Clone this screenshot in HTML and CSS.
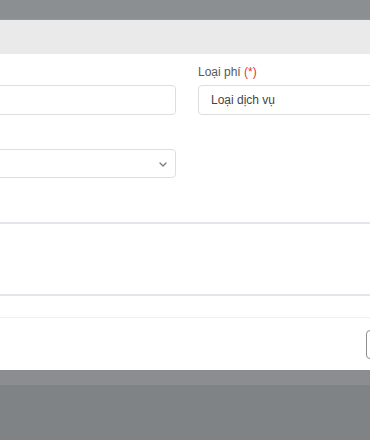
FILE: index.html
```html
<!DOCTYPE html>
<html lang="vi">
<head>
    <meta charset="UTF-8">
    <meta name="viewport" content="width=device-width, initial-scale=1.0">
    <title>Phí dịch vụ</title>
    <link rel="stylesheet" href="styles.css">
</head>
<body>

    <div class="backdrop-top"></div>

    <div class="modal">
        <div class="modal-header">
            <span class="modal-title">Thêm phí</span>
        </div>

        <form class="modal-body" id="feeForm">
            <div class="field">
                <label for="feeName">Tên phí <span class="req">(*)</span></label>
                <input type="text" id="feeName" class="control">
            </div>

            <div class="field">
                <label for="feeType">Loại phí <span class="req">(*)</span></label>
                <input type="text" id="feeType" class="control" value="Loại dịch vụ">
            </div>

            <div class="field field-select">
                <label for="unit">Đơn vị</label>
                <div class="select-wrap">
                    <select id="unit" class="control">
                        <option></option>
                    </select>
                    <svg class="chevron" width="8" height="5" viewBox="0 0 8 5">
                        <path d="M1 1l3 3 3-3" fill="none" stroke="#77777f" stroke-width="1.3" stroke-linecap="round" stroke-linejoin="round"/>
                    </svg>
                </div>
            </div>

            <div class="field field-wide">
                <label for="note">Ghi chú</label>
                <textarea id="note" class="control"></textarea>
            </div>
        </form>

        <div class="modal-footer">
            <button type="button" class="btn">Đóng</button>
        </div>
    </div>

    <div class="backdrop-band"></div>

</body>
</html>
```

FILE: styles.css
```css
body {
    margin: 0;
    padding: 0;
    height: 440px;
    overflow: hidden;
    background-color: #808386;
    font-family: "Helvetica Neue", "Liberation Sans", Arial, sans-serif;
}

.backdrop-top {
    height: 19px;
    background-color: #8b8f92;
}

.modal {
    width: 800px;
    margin-left: -202px;
    background-color: #fff;
    border-top: 1px solid #959799;
}

.modal-header {
    height: 34px;
    line-height: 34px;
    padding-left: 16px;
    background-color: #eaeaea;
}

.modal-title {
    font-size: 14px;
    font-weight: bold;
    color: #333;
}

.modal-body {
    display: grid;
    grid-template-columns: 378px 378px;
    column-gap: 22px;
    row-gap: 13px;
    padding: 10px 22px 21px 0;
    margin: 0;
}

.field label {
    display: block;
    height: 16px;
    line-height: 16px;
    margin-bottom: 5px;
    font-size: 12px;
    color: #585858;
}

.req {
    color: #e5333c;
}

.control {
    display: block;
    width: 100%;
    height: 30px;
    padding: 0 12px;
    box-sizing: border-box;
    border: 1px solid #dddde2;
    border-radius: 4px;
    background-color: #fff;
    font-family: inherit;
    font-size: 12px;
    color: #444;
}

.field-select {
    grid-column: 1;
}

.select-wrap {
    position: relative;
}

.select-wrap select {
    height: 29px;
    appearance: none;
    -webkit-appearance: none;
}

.chevron {
    position: absolute;
    right: 9px;
    top: 13px;
}

.field-wide {
    grid-column: 1 / 3;
    margin-top: 10px;
}

.field-wide textarea {
    height: 74px;
    margin-left: -60px;
    width: calc(100% + 120px);
    border-width: 2px 0;
    border-color: #e4e4ea;
    border-radius: 0;
    resize: none;
}

.modal-footer {
    height: 53px;
    border-top: 1px solid #f1f1f3;
    padding-top: 12px;
    padding-left: 568px;
    box-sizing: border-box;
}

.btn {
    height: 29px;
    padding: 0 16px;
    border: 1px solid #8e8e92;
    border-radius: 4px;
    background-color: #fff;
    color: #333;
    font-size: 12px;
    cursor: pointer;
}

.backdrop-band {
    height: 15px;
    background-color: #8b8e91;
}
```
